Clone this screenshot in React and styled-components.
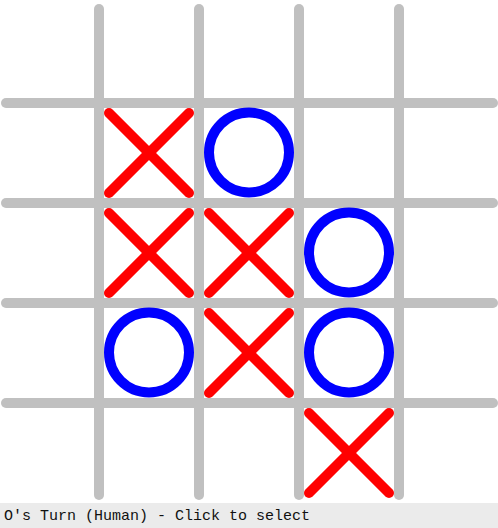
import styled, { createGlobalStyle } from "styled-components";

const GlobalStyle = createGlobalStyle`
  html, body {
    margin: 0;
    padding: 0;
    background: #ffffff;
  }
`;

const CELL = 100;
const OFFSET_X = -1;
const OFFSET_Y = 3;

// row, col, mark
const MOVES = [
  [1, 1, "X"],
  [1, 2, "O"],
  [2, 1, "X"],
  [2, 2, "X"],
  [2, 3, "O"],
  [3, 1, "O"],
  [3, 2, "X"],
  [3, 3, "O"],
  [4, 3, "X"],
];

const Page = styled.div`
  width: 498px;
  display: flex;
  flex-direction: column;
`;

const Board = styled.svg`
  display: block;
  width: 498px;
  height: 503px;
`;

const StatusBar = styled.div`
  height: 25px;
  box-sizing: border-box;
  padding: 4px 4px 0;
  background: #ebebeb;
  color: #111;
  font-family: "Liberation Mono", "Courier New", monospace;
  font-size: 15px;
  line-height: 20px;
  white-space: pre;
`;

const Cross = ({ cx, cy }) => (
  <g stroke="#ff0000" strokeWidth="10" strokeLinecap="round">
    <line x1={cx - 40} y1={cy - 40} x2={cx + 40} y2={cy + 40} />
    <line x1={cx + 40} y1={cy - 40} x2={cx - 40} y2={cy + 40} />
  </g>
);

const Nought = ({ cx, cy }) => (
  <circle cx={cx} cy={cy} r="40" fill="none" stroke="#0000ff" strokeWidth="10" />
);

const App = () => {
  const lines = [1, 2, 3, 4];
  return (
    <Page>
      <GlobalStyle />
      <Board viewBox="0 0 498 503">
        <g stroke="#c0c0c0" strokeWidth="10" strokeLinecap="round">
          {lines.map((i) => (
            <line key={"v" + i} x1={OFFSET_X + i * CELL} y1={9} x2={OFFSET_X + i * CELL} y2={495} />
          ))}
          {lines.map((i) => (
            <line key={"h" + i} x1={6} y1={OFFSET_Y + i * CELL} x2={493} y2={OFFSET_Y + i * CELL} />
          ))}
        </g>
        {MOVES.map(([r, c, m]) => {
          const cx = OFFSET_X + c * CELL + CELL / 2;
          const cy = OFFSET_Y + r * CELL + CELL / 2;
          return m === "X" ? (
            <Cross key={r + "-" + c} cx={cx} cy={cy} />
          ) : (
            <Nought key={r + "-" + c} cx={cx} cy={cy - 0.5} />
          );
        })}
      </Board>
      <StatusBar>O's Turn (Human) - Click to select</StatusBar>
    </Page>
  );
};

export default App;
